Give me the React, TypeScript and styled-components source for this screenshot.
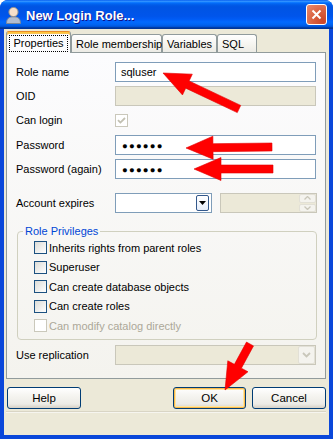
import styled, { createGlobalStyle } from "styled-components";

const GlobalStyle = createGlobalStyle`
  html, body {
    margin: 0;
    padding: 0;
    background: #ffffff;
  }
  body {
    font-family: "Liberation Sans", Arial, sans-serif;
    font-size: 11px;
    color: #000;
  }
`;

const Window = styled.div`
  position: relative;
  width: 333px;
  height: 439px;
  display: flex;
  flex-direction: column;
  background: #0a47da;
  border-radius: 8px 8px 0 0;
  overflow: hidden;
`;

const TitleBar = styled.div`
  height: 29px;
  flex: none;
  display: flex;
  align-items: center;
  padding: 0 6px 0 5px;
  gap: 4px;
  background: linear-gradient(
    180deg,
    #0058ee 0%,
    #3593ff 4%,
    #288eff 6%,
    #127dff 8%,
    #036ffc 10%,
    #0262ee 14%,
    #0057e5 20%,
    #0054e3 24%,
    #0055eb 56%,
    #005bf5 66%,
    #026afe 76%,
    #0062ef 86%,
    #0052d6 92%,
    #0040ab 94%,
    #003092 100%
  );
`;

const Title = styled.div`
  flex: 1;
  color: #fff;
  font-family: "Liberation Sans", Arial, sans-serif;
  font-weight: 700;
  font-size: 13px;
  text-shadow: 1px 1px #0f1089;
  padding-top: 1px;
`;

const CloseButton = styled.div`
  width: 21px;
  height: 21px;
  box-sizing: border-box;
  border: 1px solid #fff;
  border-radius: 3px;
  background: radial-gradient(circle at 85% 85%, #cc4628 0%, #d9603f 45%, #e98c6f 100%);
  display: flex;
  align-items: center;
  justify-content: center;
`;

const Frame = styled.div`
  flex: 1;
  margin: 0 4px 4px 4px;
  background: #ece9d8;
  display: flex;
  flex-direction: column;
  padding: 2px 3px 0 2px;
`;

const TabStrip = styled.div`
  height: 21px;
  display: flex;
  align-items: flex-end;
`;

const Tab = styled.div<{ $active?: boolean; $w: number }>`
  position: relative;
  z-index: ${(p) => (p.$active ? 1 : 0)};
  width: ${(p) => p.$w}px;
  box-sizing: border-box;
  height: ${(p) => (p.$active ? 22 : 18)}px;
  margin-bottom: ${(p) => (p.$active ? -1 : 0)}px;
  border: 1px solid #919b9c;
  border-bottom: none;
  border-top-color: ${(p) => (p.$active ? "#e68b2c" : "#919b9c")};
  border-radius: 3px 3px 0 0;
  box-shadow: ${(p) => (p.$active ? "inset 0 1px #ffc73c, inset 0 2px #f8c35a" : "none")};
  background: ${(p) => (p.$active ? "#fcfcfe" : "linear-gradient(180deg, #ffffff, #f3f2ec 70%, #ecebe6)")};
  display: flex;
  align-items: center;
  justify-content: ${(p) => (p.$active ? "center" : "flex-start")};
  padding: ${(p) => (p.$active ? "1px 0 0 0" : "0 0 0 4px")};
  white-space: nowrap;
`;

const FocusLabel = styled.span`
  outline: 1px dotted #000;
  padding: 1px 3px 2px 3px;
`;

const Panel = styled.div`
  height: 327px;
  box-sizing: border-box;
  border: 1px solid #919b9c;
  background: linear-gradient(180deg, #fcfcfe 0%, #f4f3ee 100%);
  display: flex;
  flex-direction: column;
  padding: 0 8px 0 9px;
`;

const Row = styled.div<{ $mt: number }>`
  display: flex;
  align-items: center;
  height: 20px;
  margin-top: ${(p) => p.$mt}px;
`;

const Label = styled.div`
  width: 99px;
  flex: none;
`;

const Field = styled.div<{ $disabled?: boolean; $w?: number }>`
  position: relative;
  width: ${(p) => p.$w ?? 201}px;
  height: 20px;
  box-sizing: border-box;
  border: 1px solid ${(p) => (p.$disabled ? "#c9c7ba" : "#7f9db9")};
  background: ${(p) => (p.$disabled ? "#ece9d8" : "#fff")};
  display: flex;
  align-items: center;
  padding-left: 5px;
`;

const Dots = styled.span`
  font-size: 9.5px;
  letter-spacing: 1.2px;
  padding-left: 1px;
`;

const Check = styled.div<{ $disabled?: boolean }>`
  width: 13px;
  height: 13px;
  flex: none;
  box-sizing: border-box;
  border: 1px solid ${(p) => (p.$disabled ? "#cac8bb" : "#1c5180")};
  background: ${(p) => (p.$disabled ? "#fff" : "linear-gradient(135deg, #dcdcd7 0%, #ffffff 100%)")};
  display: flex;
  align-items: center;
  justify-content: center;
`;

const DateGroup = styled.div`
  display: flex;
  gap: 8px;
`;

const DropButton = styled.div`
  position: absolute;
  right: 2px;
  top: 1px;
  width: 13px;
  height: 16px;
  box-sizing: border-box;
  border: 1px solid #33588b;
  border-radius: 2px;
  background: linear-gradient(180deg, #ffffff, #e7eefa);
  display: flex;
  align-items: center;
  justify-content: center;
`;

const SpinButtons = styled.div`
  position: absolute;
  right: 0;
  top: 0;
  width: 17px;
  height: 18px;
  display: flex;
  flex-direction: column;
  gap: 1px;
`;

const SpinHalf = styled.div`
  flex: 1;
  background: #f4f3ee;
  border: 1px solid #e2e0d6;
  border-radius: 2px;
  display: flex;
  align-items: center;
  justify-content: center;
`;

const ComboButton = styled.div`
  position: absolute;
  right: 0;
  top: 0;
  width: 17px;
  height: 18px;
  box-sizing: border-box;
  background: #f4f3ee;
  border: 1px solid #e2e0d6;
  border-radius: 2px;
  display: flex;
  align-items: center;
  justify-content: center;
`;

const Group = styled.fieldset`
  margin: 12px 0 0 1px;
  border: 1px solid #d0d0bf;
  border-radius: 4px;
  padding: 0 0 3px 5px;
  min-width: 0;
`;

const Legend = styled.legend`
  padding: 0 2px;
  color: #0046d5;
  line-height: 13px;
`;

const CheckList = styled.div`
  padding-left: 11px;
  display: flex;
  flex-direction: column;
`;

const CheckRow = styled.div<{ $disabled?: boolean }>`
  height: 19.5px;
  display: flex;
  align-items: center;
  gap: 2px;
  color: ${(p) => (p.$disabled ? "#aca899" : "#000")};
`;

const ButtonRow = styled.div`
  display: flex;
  justify-content: space-between;
  margin-top: 8px;
  padding-left: 1px;
`;

const ButtonPair = styled.div`
  display: flex;
  gap: 6px;
`;

const Button = styled.div<{ $w: number; $default?: boolean }>`
  width: ${(p) => p.$w}px;
  height: 22px;
  box-sizing: border-box;
  border: 1px solid #003c74;
  border-radius: 3px;
  background: linear-gradient(180deg, #ffffff 0%, #f5f4f0 40%, #ecebe6 80%, #d6d0c5 100%);
  box-shadow: ${(p) =>
    p.$default ? "inset 0 0 0 1px #f9b94a, inset 0 0 0 2px #ffe6a0" : "none"};
  display: flex;
  align-items: center;
  justify-content: center;
  font-size: 11.5px;
`;

const StatusBar = styled.div`
  margin-top: auto;
  height: 23px;
  border-top: 1px solid #d9d5c5;
  box-shadow: inset 0 1px #f6f5ef;
`;

const Overlay = styled.svg`
  position: absolute;
  left: 0;
  top: 0;
  pointer-events: none;
`;

type Pt = [number, number];

function arrowPoints(tip: Pt, tail: Pt, shaft = 8, headLen = 27, headW = 23) {
  const dx = tail[0] - tip[0];
  const dy = tail[1] - tip[1];
  const len = Math.hypot(dx, dy);
  const ux = dx / len;
  const uy = dy / len;
  const nx = -uy;
  const ny = ux;
  const bx = tip[0] + ux * headLen;
  const by = tip[1] + uy * headLen;
  const pts: Pt[] = [
    tip,
    [bx + (nx * headW) / 2, by + (ny * headW) / 2],
    [bx + (nx * shaft) / 2, by + (ny * shaft) / 2],
    [tail[0] + (nx * shaft) / 2, tail[1] + (ny * shaft) / 2],
    [tail[0] - (nx * shaft) / 2, tail[1] - (ny * shaft) / 2],
    [bx - (nx * shaft) / 2, by - (ny * shaft) / 2],
    [bx - (nx * headW) / 2, by - (ny * headW) / 2],
  ];
  return pts.map((p) => p.join(",")).join(" ");
}

const arrows: { tip: Pt; tail: Pt }[] = [
  { tip: [163, 73], tail: [239, 109] },
  { tip: [186, 148], tail: [272, 147] },
  { tip: [194, 169], tail: [273, 169] },
  { tip: [225, 390], tail: [250, 344] },
];

const UserIcon = () => (
  <svg width="17" height="18" viewBox="0 0 17 18">
    <path d="M1.5 17.5 C1.5 12.5 4 10.8 8.5 10.8 C13 10.8 15.5 12.5 15.5 17.5 Z" fill="#b3bdcf" stroke="#7c8798" />
    <circle cx="8.5" cy="6" r="4.6" fill="#f7dfca" stroke="#8f8f8f" />
  </svg>
);

const CheckMark = ({ color }: { color: string }) => (
  <svg width="9" height="9" viewBox="0 0 9 9">
    <path d="M1 4.2 L3.4 6.6 L8 2" fill="none" stroke={color} strokeWidth="1.8" />
  </svg>
);

const privileges = [
  { label: "Inherits rights from parent roles" },
  { label: "Superuser" },
  { label: "Can create database objects" },
  { label: "Can create roles" },
  { label: "Can modify catalog directly", disabled: true },
];

export default function App() {
  return (
    <>
      <GlobalStyle />
      <Window>
        <TitleBar>
          <UserIcon />
          <Title>New Login Role...</Title>
          <CloseButton>
            <svg width="11" height="11" viewBox="0 0 11 11">
              <path d="M1.5 1.5 L9.5 9.5 M9.5 1.5 L1.5 9.5" stroke="#fff" strokeWidth="2" />
            </svg>
          </CloseButton>
        </TitleBar>
        <Frame>
          <TabStrip>
            <Tab $active $w={65}>
              <FocusLabel>Properties</FocusLabel>
            </Tab>
            <Tab $w={91}>Role membership</Tab>
            <Tab $w={55}>Variables</Tab>
            <Tab $w={40}>SQL</Tab>
          </TabStrip>
          <Panel>
            <Row $mt={9}>
              <Label>Role name</Label>
              <Field>sqluser</Field>
            </Row>
            <Row $mt={4}>
              <Label>OID</Label>
              <Field $disabled />
            </Row>
            <Row $mt={4}>
              <Label>Can login</Label>
              <Check $disabled>
                <CheckMark color="#c2c0b2" />
              </Check>
            </Row>
            <Row $mt={5}>
              <Label>Password</Label>
              <Field>
                <Dots>●●●●●●</Dots>
              </Field>
            </Row>
            <Row $mt={4}>
              <Label>Password (again)</Label>
              <Field>
                <Dots>●●●●●●</Dots>
              </Field>
            </Row>
            <Row $mt={14}>
              <Label>Account expires</Label>
              <DateGroup>
                <Field $w={97}>
                  <DropButton>
                    <svg width="7" height="4" viewBox="0 0 7 4">
                      <path d="M0 0 H7 L3.5 4 Z" fill="#000" />
                    </svg>
                  </DropButton>
                </Field>
                <Field $w={97} $disabled>
                  <SpinButtons>
                    <SpinHalf>
                      <svg width="7" height="4" viewBox="0 0 7 4">
                        <path d="M0.5 3.5 L3.5 0.5 L6.5 3.5" fill="none" stroke="#c9c7ba" strokeWidth="1.3" />
                      </svg>
                    </SpinHalf>
                    <SpinHalf>
                      <svg width="7" height="4" viewBox="0 0 7 4">
                        <path d="M0.5 0.5 L3.5 3.5 L6.5 0.5" fill="none" stroke="#c9c7ba" strokeWidth="1.3" />
                      </svg>
                    </SpinHalf>
                  </SpinButtons>
                </Field>
              </DateGroup>
            </Row>
            <Group>
              <Legend>Role Privileges</Legend>
              <CheckList>
                {privileges.map((p) => (
                  <CheckRow key={p.label} $disabled={p.disabled}>
                    <Check $disabled={p.disabled} />
                    {p.label}
                  </CheckRow>
                ))}
              </CheckList>
            </Group>
            <Row $mt={5}>
              <Label>Use replication</Label>
              <Field $disabled>
                <ComboButton>
                  <svg width="9" height="6" viewBox="0 0 9 6">
                    <path d="M1 1 L4.5 4.5 L8 1" fill="none" stroke="#c9c7ba" strokeWidth="1.8" />
                  </svg>
                </ComboButton>
              </Field>
            </Row>
          </Panel>
          <ButtonRow>
            <Button $w={74}>Help</Button>
            <ButtonPair>
              <Button $w={73} $default>
                OK
              </Button>
              <Button $w={74}>Cancel</Button>
            </ButtonPair>
          </ButtonRow>
          <StatusBar />
        </Frame>
        <Overlay width="333" height="439" viewBox="0 0 333 439">
          {arrows.map((a, i) => (
            <polygon key={i} points={arrowPoints(a.tip, a.tail)} fill="#ff0000" stroke="#e00000" strokeWidth="0.6" />
          ))}
        </Overlay>
      </Window>
    </>
  );
}
